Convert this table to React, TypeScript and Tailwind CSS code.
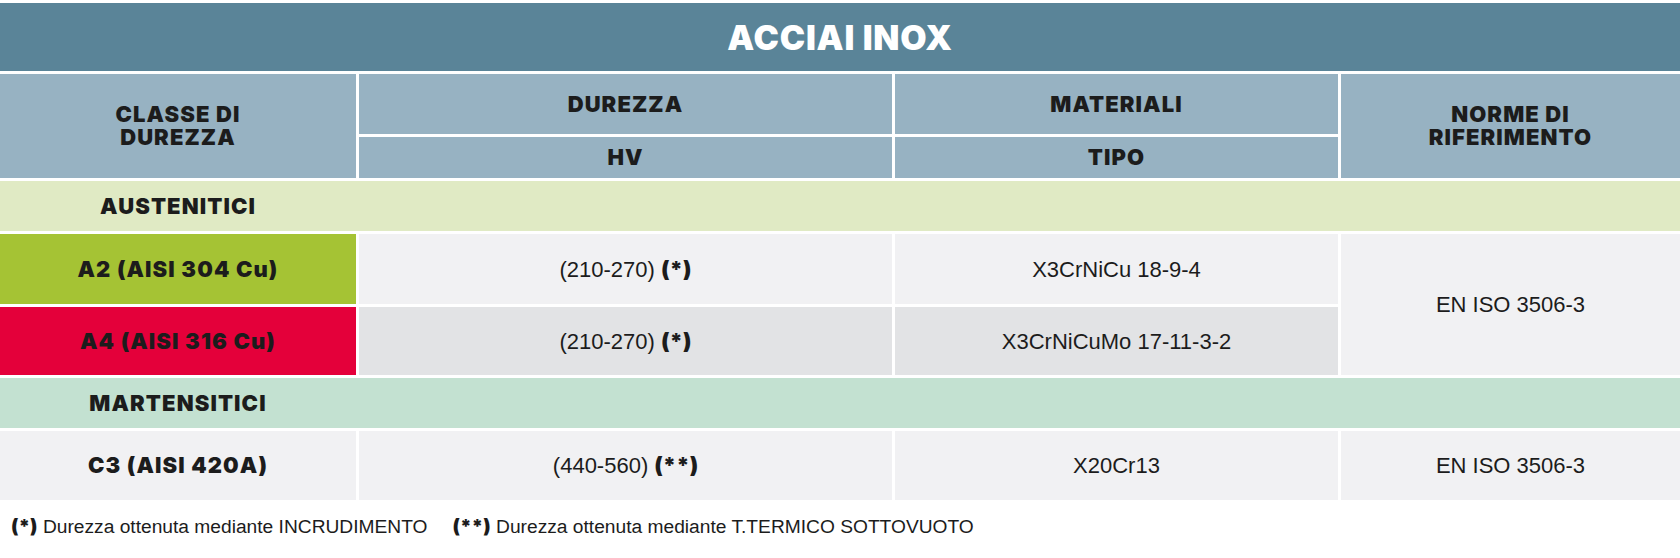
const HEAVY = "font-['Inter','Liberation_Sans',sans-serif] font-black";
const LABEL = `${HEAVY} text-[22px] tracking-[1.1px]`;
const BODY = "font-['Liberation_Sans','Arial',sans-serif] text-[22px]";

const cell = "flex items-center justify-center text-center";

export default function App() {
  return (
    <div className="w-[1680px] h-[558px] bg-white pt-[3px] text-[#1c1c1c]">
      <div className="grid grid-cols-[356px_533px_443px_1fr] grid-rows-[68px_60px_41px_50px_70px_68px_50px_69px] gap-[3px]">
        {/* Title */}
        <div className={`${cell} col-span-4 bg-[#5a8498] text-white text-[34px] tracking-[0.8px] ${HEAVY}`}>
          ACCIAI INOX
        </div>

        {/* Header */}
        <div className={`${cell} row-span-2 bg-[#97b2c2] leading-[23px] ${LABEL}`}>
          CLASSE DI
          <br />
          DUREZZA
        </div>
        <div className={`${cell} bg-[#97b2c2] ${LABEL}`}>DUREZZA</div>
        <div className={`${cell} bg-[#97b2c2] ${LABEL}`}>MATERIALI</div>
        <div className={`${cell} row-span-2 bg-[#97b2c2] leading-[23px] ${LABEL}`}>
          NORME DI
          <br />
          RIFERIMENTO
        </div>
        <div className={`${cell} bg-[#97b2c2] ${LABEL}`}>HV</div>
        <div className={`${cell} bg-[#97b2c2] ${LABEL}`}>TIPO</div>

        {/* Austenitici */}
        <div className="col-span-4 flex items-center bg-[#e0eac4]">
          <span className={`w-[356px] text-center ${LABEL}`}>AUSTENITICI</span>
        </div>

        <div className={`${cell} bg-[#a5c334] ${LABEL}`}>A2 (AISI 304 Cu)</div>
        <div className={`${cell} bg-[#f1f1f3] ${BODY}`}>
          (210-270)&nbsp;<span className={HEAVY}>(*)</span>
        </div>
        <div className={`${cell} bg-[#f1f1f3] ${BODY}`}>X3CrNiCu 18-9-4</div>
        <div className={`${cell} row-span-2 bg-[#f1f1f3] ${BODY}`}>EN ISO 3506-3</div>

        <div className={`${cell} bg-[#e4003a] ${LABEL}`}>A4 (AISI 316 Cu)</div>
        <div className={`${cell} bg-[#e2e3e5] ${BODY}`}>
          (210-270)&nbsp;<span className={HEAVY}>(*)</span>
        </div>
        <div className={`${cell} bg-[#e2e3e5] ${BODY}`}>X3CrNiCuMo 17-11-3-2</div>

        {/* Martensitici */}
        <div className="col-span-4 flex items-center bg-[#c3e1d1]">
          <span className={`w-[356px] text-center ${LABEL}`}>MARTENSITICI</span>
        </div>

        <div className={`${cell} bg-[#f1f1f3] ${LABEL}`}>C3 (AISI 420A)</div>
        <div className={`${cell} bg-[#f1f1f3] ${BODY}`}>
          (440-560)&nbsp;<span className={HEAVY}>(**)</span>
        </div>
        <div className={`${cell} bg-[#f1f1f3] ${BODY}`}>X20Cr13</div>
        <div className={`${cell} bg-[#f1f1f3] ${BODY}`}>EN ISO 3506-3</div>
      </div>

      {/* Footnotes */}
      <div className="mt-[15px] pl-[11px] flex gap-[25px] text-[19.2px] leading-[22px] font-['Liberation_Sans','Arial',sans-serif]">
        <p>
          <span className={HEAVY}>(*)</span> Durezza ottenuta mediante INCRUDIMENTO
        </p>
        <p>
          <span className={HEAVY}>(**)</span> Durezza ottenuta mediante T.TERMICO SOTTOVUOTO
        </p>
      </div>
    </div>
  );
}
